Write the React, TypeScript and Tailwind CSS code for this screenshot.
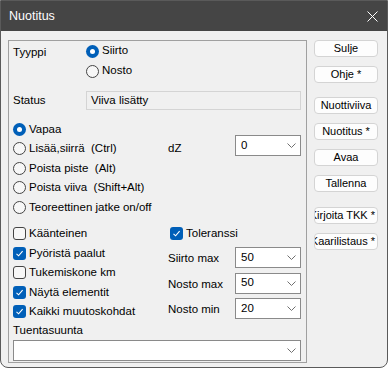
import React from 'react';

function Radio({ checked, label }: { checked?: boolean; label: string }) {
  return (
    <div className="flex items-center h-[19.5px]">
      {checked ? (
        <span className="w-[13px] h-[13px] rounded-full bg-[#005fb8] flex items-center justify-center shrink-0">
          <span className="w-[5px] h-[5px] rounded-full bg-white" />
        </span>
      ) : (
        <span className="w-[13px] h-[13px] rounded-full border border-[#444] bg-[#f7f7f7] shrink-0" />
      )}
      <span className="ml-[3px] whitespace-pre">{label}</span>
    </div>
  );
}

function Check({ checked, label }: { checked?: boolean; label: string }) {
  return (
    <div className="flex items-center h-[19.5px]">
      {checked ? (
        <span className="w-[13px] h-[13px] rounded-[3px] bg-[#005fb8] flex items-center justify-center shrink-0">
          <svg width="9" height="9" viewBox="0 0 9 9" fill="none">
            <path d="M1.5 4.8 L3.6 6.8 L7.6 2.2" stroke="white" strokeWidth="1.1" />
          </svg>
        </span>
      ) : (
        <span className="w-[13px] h-[13px] rounded-[3px] border border-[#444] bg-[#f7f7f7] shrink-0" />
      )}
      <span className="ml-[3px] whitespace-pre">{label}</span>
    </div>
  );
}

function Combo({ value, width }: { value: string; width: string }) {
  return (
    <div className={`${width} h-[21px] bg-white border border-[#8a8a8a] flex items-center justify-between pl-[5px] pr-[4px] shrink-0`}>
      <span>{value}</span>
      <svg width="9" height="5" viewBox="0 0 9 5" fill="none">
        <path d="M0.5 0.5 L4.5 4.5 L8.5 0.5" stroke="#707070" strokeWidth="1" />
      </svg>
    </div>
  );
}

// wide labels overflow the button in the original, clipped on the left
function Btn({ label, mt, wide }: { label: string; mt: string; wide?: boolean }) {
  return (
    <div
      className={`${mt} w-[64px] h-[17px] bg-[#fdfdfd] border border-[#d4d4d4] rounded-[4px] flex items-center overflow-hidden whitespace-nowrap text-[11px] ${
        wide ? 'justify-end pr-[2px]' : 'justify-center'
      }`}
    >
      <span className="shrink-0">{label}</span>
    </div>
  );
}

export default function App() {
  return (
    <div className="w-[388px] h-[368px] bg-[#f0f0f0] border border-[#5a5a5a] rounded-b-[8px] overflow-hidden flex flex-col text-[11.5px] text-black font-['Liberation_Sans',Arial,sans-serif] leading-none">
      <div className="h-[30px] bg-[#454545] flex items-center justify-between pl-[8px] pr-[9px] shrink-0">
        <span className="text-white text-[12.5px]">Nuotitus</span>
        <svg width="11" height="11" viewBox="0 0 11 11" fill="none">
          <path d="M0.5 0.5 L10.5 10.5 M10.5 0.5 L0.5 10.5" stroke="white" strokeWidth="1" />
        </svg>
      </div>

      <div className="flex pl-[7px] pt-[9px]">
        {/* group box */}
        <div className="w-[299px] h-[323px] border border-[#a0a0a0] pl-[4px] pr-[4px] flex flex-col">
          <div className="flex items-center h-[20px]">
            <span className="w-[73px] pt-[3px]">Tyyppi</span>
            <Radio checked label="Siirto" />
          </div>
          <div className="flex items-center h-[20px]">
            <span className="w-[73px]" />
            <Radio label="Nosto" />
          </div>

          <div className="flex items-center h-[19px] mt-[10px]">
            <span className="w-[73px]">Status</span>
            <div className="w-[215px] h-[19px] bg-[#f0f0f0] border border-[#d4d4d4] flex items-center pl-[4px]">
              Viiva lisätty
            </div>
          </div>

          <div className="flex mt-[9.5px]">
            <div className="w-[155px] flex flex-col">
              <Radio checked label="Vapaa" />
              <Radio label="Lisää,siirrä  (Ctrl)" />
              <Radio label="Poista piste  (Alt)" />
              <Radio label="Poista viiva  (Shift+Alt)" />
              <Radio label="Teoreettinen jatke on/off" />
            </div>
            <div className="flex items-center h-[21px] mt-[15.5px]">
              <span className="w-[67px] pt-[6px]">dZ</span>
              <Combo value="0" width="w-[66px]" />
            </div>
          </div>

          <div className="flex mt-[7px]">
            <div className="w-[155px] flex flex-col">
              <Check label="Käänteinen" />
              <Check checked label="Pyöristä paalut" />
              <Check label="Tukemiskone km" />
              <Check checked label="Näytä elementit" />
              <Check checked label="Kaikki muutoskohdat" />
            </div>
            <div className="flex flex-col">
              <div className="pl-[2px]">
                <Check checked label="Toleranssi" />
              </div>
              <div className="flex flex-col gap-[4.5px] mt-[3.5px]">
                <div className="flex items-center">
                  <span className="w-[67px] pt-[2px]">Siirto max</span>
                  <Combo value="50" width="w-[66px]" />
                </div>
                <div className="flex items-center">
                  <span className="w-[67px] pt-[3px]">Nosto max</span>
                  <Combo value="50" width="w-[66px]" />
                </div>
                <div className="flex items-center">
                  <span className="w-[67px] pt-[3px]">Nosto min</span>
                  <Combo value="20" width="w-[66px]" />
                </div>
              </div>
            </div>
          </div>

          <div className="h-[14px] mt-[2.5px] flex items-center">Tuentasuunta</div>
          <div className="mt-[2px]">
            <Combo value="" width="w-[288px]" />
          </div>
        </div>

        {/* buttons */}
        <div className="flex flex-col ml-[7px]">
          <Btn label="Sulje" mt="mt-0" />
          <Btn label="Ohje *" mt="mt-[9px]" />
          <Btn label="Nuottiviiva" mt="mt-[14px]" />
          <Btn label="Nuotitus *" mt="mt-[9px]" />
          <Btn label="Avaa" mt="mt-[9px]" />
          <Btn label="Tallenna" mt="mt-[9px]" />
          <Btn label="Kirjoita TKK *" mt="mt-[15px]" wide />
          <Btn label="Kaarilistaus *" mt="mt-[9px]" wide />
        </div>
      </div>
    </div>
  );
}
